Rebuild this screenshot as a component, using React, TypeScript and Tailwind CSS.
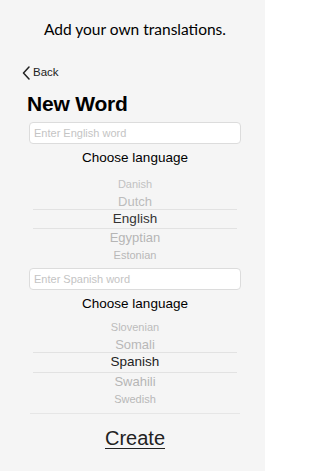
type Row = { label: string; h: string; size: string; color: string }

function Picker({ rows }: { rows: Row[] }) {
  return (
    <div className="mx-[28px] flex flex-col">
      {rows.map((r, i) => (
        <div
          key={r.label}
          className={`flex items-center justify-center ${r.h} ${r.size} ${r.color} ${
            i === 2 ? "border-y border-[#e2e2e2]" : ""
          }`}
        >
          {r.label}
        </div>
      ))}
    </div>
  )
}

function Field({ placeholder }: { placeholder: string }) {
  return (
    <div className="mx-[24px] h-[22px] bg-white border border-[#dcdcdc] rounded-[4px] flex items-center px-[4px] text-[11px] text-[#c4c4c4]">
      {placeholder}
    </div>
  )
}

export default function App() {
  const first: Row[] = [
    { label: "Danish", h: "h-[20px]", size: "text-[11px]", color: "text-[#c2c2c2]" },
    { label: "Dutch", h: "h-[15px]", size: "text-[13px]", color: "text-[#bcbcbc]" },
    { label: "English", h: "h-[20px]", size: "text-[13.5px]", color: "text-[#333]" },
    { label: "Egyptian", h: "h-[18px]", size: "text-[13px]", color: "text-[#b5b5b5]" },
    { label: "Estonian", h: "h-[16px]", size: "text-[11px]", color: "text-[#b8b8b8]" },
  ]
  const second: Row[] = [
    { label: "Slovenian", h: "h-[20px]", size: "text-[11px]", color: "text-[#bcbcbc]" },
    { label: "Somali", h: "h-[15px]", size: "text-[13px]", color: "text-[#b8b8b8]" },
    { label: "Spanish", h: "h-[21px]", size: "text-[13.5px]", color: "text-[#222]" },
    { label: "Swahili", h: "h-[18px]", size: "text-[13px]", color: "text-[#b5b5b5]" },
    { label: "Swedish", h: "h-[16px]", size: "text-[11px]", color: "text-[#b8b8b8]" },
  ]

  return (
    <div
      className="w-[265px] h-[471px] bg-[#f5f5f5] overflow-hidden flex flex-col pl-[5px]"
      style={{ fontFamily: "'Liberation Sans', Arial, sans-serif" }}
    >
      <div
        className="h-[60px] flex items-center justify-center text-[15.5px] text-black"
        style={{ fontFamily: "Lato, 'Noto Sans', sans-serif" }}
      >
        Add your own translations.
      </div>

      <div className="flex items-center h-[26px] pl-[17px] text-[11.5px] text-[#222] gap-[3px]">
        <svg width="8" height="14" viewBox="0 0 8 14" fill="none">
          <path d="M7 1L1.5 7L7 13" stroke="#222" strokeWidth="1.5" strokeLinecap="round" strokeLinejoin="round" />
        </svg>
        Back
      </div>

      <div className="h-[36px] flex items-center pl-[22px] text-[21px] font-bold text-black tracking-[-0.2px]">
        New Word
      </div>

      <Field placeholder="Enter English word" />
      <div className="h-[26px] mt-[1px] flex items-center justify-center text-[13.5px] text-black">
        Choose language
      </div>
      <div className="pt-[3px]">
        <Picker rows={first} />
      </div>

      <div className="mt-[5px]">
        <Field placeholder="Enter Spanish word" />
      </div>
      <div className="h-[26px] mt-[1px] flex items-center justify-center text-[13.5px] text-black">
        Choose language
      </div>
      <Picker rows={second} />

      <div className="mx-[25px] mt-[6px] border-t border-[#e6e6e6]" />

      <div className="flex justify-center pt-[9px]">
        <span className="text-[20px] text-[#222] underline underline-offset-[3px] decoration-[1px]">
          Create
        </span>
      </div>
    </div>
  )
}
